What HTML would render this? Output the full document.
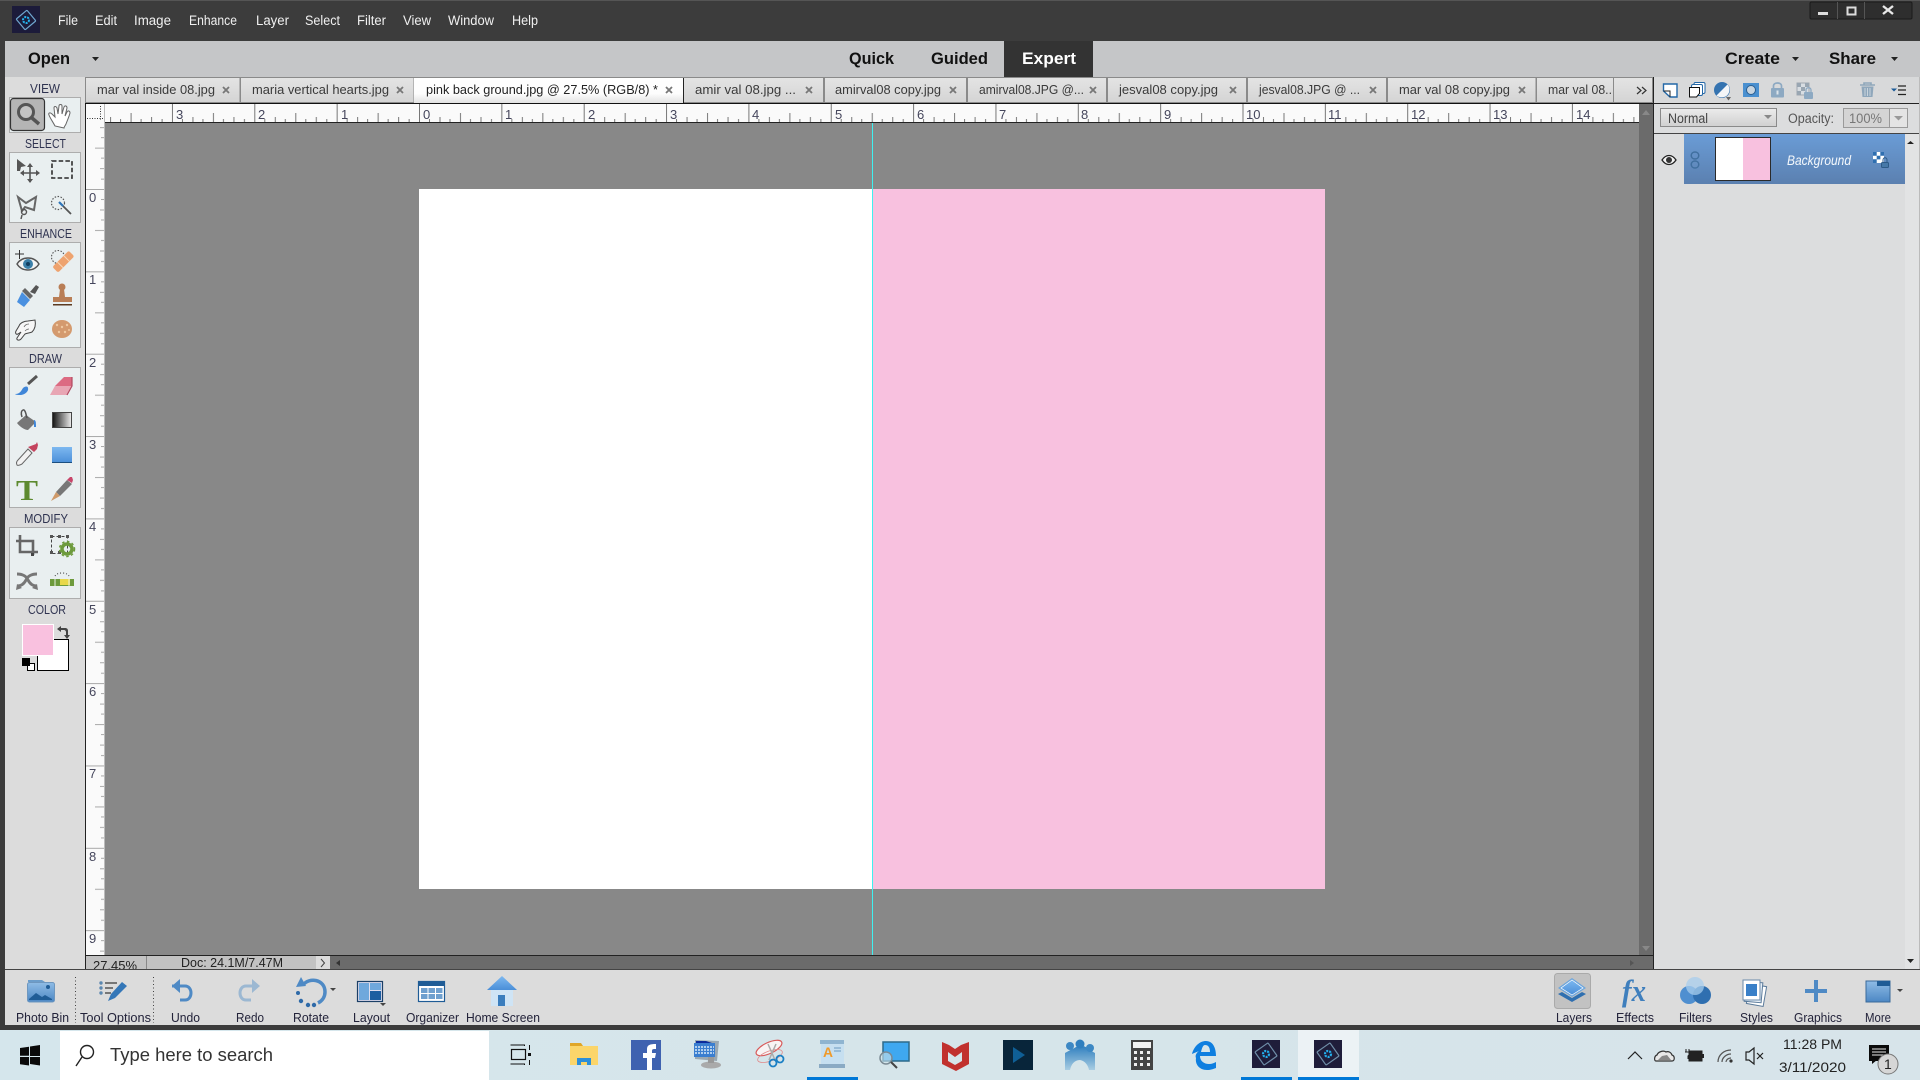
<!DOCTYPE html>
<html><head><meta charset="utf-8"><title>Photoshop Elements</title>
<style>
html,body{margin:0;padding:0;width:1920px;height:1080px;overflow:hidden;background:#3c3c3c}
svg{display:block;position:absolute;left:0;top:0}
text{font-family:"Liberation Sans",sans-serif;white-space:pre}
.m{font-size:13.5px;fill:#f0f0f0}
.t{font-size:13px;fill:#3a3a3a}
.x{font-size:13px;fill:#6e6e6e;font-weight:bold}
.b{font-size:17px;font-weight:bold;fill:#111}
.l{font-size:12.5px;fill:#2f3350}
.r{font-size:13px;fill:#45465c}
.c{font-size:12.5px;fill:#23233a}
.p{font-size:13px;fill:#4a4a4a}
</style></head><body>
<svg width="1920" height="1080" viewBox="0 0 1920 1080" xmlns="http://www.w3.org/2000/svg">
<defs>
<linearGradient id="tab" x1="0" y1="0" x2="0" y2="1"><stop offset="0" stop-color="#e4e4e4"/><stop offset="1" stop-color="#d4d4d4"/></linearGradient>
<linearGradient id="tabA" x1="0" y1="0" x2="0" y2="1"><stop offset="0" stop-color="#fff"/><stop offset=".6" stop-color="#fdfdfd"/><stop offset="1" stop-color="#dedede"/></linearGradient>
<linearGradient id="layer" x1="0" y1="0" x2="0" y2="1"><stop offset="0" stop-color="#6a9cd6"/><stop offset="1" stop-color="#5b80b0"/></linearGradient>
<linearGradient id="sel" x1="0" y1="0" x2="0" y2="1"><stop offset="0" stop-color="#ececec"/><stop offset="1" stop-color="#d0d0d0"/></linearGradient>
<linearGradient id="grad" x1="0" y1="0" x2="1" y2="0"><stop offset="0" stop-color="#111"/><stop offset="1" stop-color="#eee"/></linearGradient>
<linearGradient id="blue" x1="0" y1="0" x2="0" y2="1"><stop offset="0" stop-color="#7db8f0"/><stop offset="1" stop-color="#4a8ed8"/></linearGradient>
<linearGradient id="blue2" x1="0" y1="0" x2="0" y2="1"><stop offset="0" stop-color="#8fbce6"/><stop offset="1" stop-color="#4c87c4"/></linearGradient>
<linearGradient id="tb" x1="0" y1="0" x2="1" y2="0"><stop offset="0" stop-color="#d5e6ec"/><stop offset=".5" stop-color="#d6e5ea"/><stop offset="1" stop-color="#d7e4ea"/></linearGradient>
<linearGradient id="ppl" x1="0" y1="0" x2="0" y2="1"><stop offset="0" stop-color="#2f7fbf"/><stop offset="1" stop-color="#a8cde2"/></linearGradient>
<pattern id="hr" patternUnits="userSpaceOnUse" x="419" y="104" width="82.35" height="18">
<g fill="#777"><rect x="0" y="0" width="1" height="18"/><rect x="41" y="9" width="1" height="9"/><rect x="20.5" y="13" width="1" height="5"/><rect x="61.5" y="13" width="1" height="5"/>
<rect x="10" y="15" width="1" height="3"/><rect x="30.5" y="15" width="1" height="3"/><rect x="51" y="15" width="1" height="3"/><rect x="72" y="15" width="1" height="3"/></g></pattern>
<pattern id="vr" patternUnits="userSpaceOnUse" x="86" y="189" width="18" height="82.35">
<g fill="#a8a8a8"><rect x="0" y="0" width="18" height="1"/><rect x="9" y="41" width="9" height="1"/><rect x="14" y="20.5" width="4" height="1"/><rect x="14" y="61.5" width="4" height="1"/>
<rect x="15" y="10" width="3" height="1"/><rect x="15" y="30.5" width="3" height="1"/><rect x="15" y="51" width="3" height="1"/><rect x="15" y="72" width="3" height="1"/></g></pattern>
</defs>

<!-- Frame -->
<rect width="1920" height="1080" fill="#3c3c3c"/>
<rect x="0" y="0" width="1920" height="1" fill="#555"/>
<!-- Title logo -->
<rect x="12" y="6" width="28" height="27" fill="#1c1b3a"/>
<g transform="rotate(-40 26 20)"><rect x="19" y="13" width="14" height="14" fill="none" stroke="#6fa7d0" stroke-width="1.2" rx="1"/></g>
<circle cx="26" cy="20" r="3" fill="none" stroke="#26b5ee" stroke-width="2" stroke-dasharray="2 1"/>
<!-- Menu -->
<text class="m" x="58" y="25" textLength="20" lengthAdjust="spacingAndGlyphs">File</text>
<text class="m" x="95" y="25" textLength="22" lengthAdjust="spacingAndGlyphs">Edit</text>
<text class="m" x="134" y="25" textLength="37" lengthAdjust="spacingAndGlyphs">Image</text>
<text class="m" x="189" y="25" textLength="48" lengthAdjust="spacingAndGlyphs">Enhance</text>
<text class="m" x="256" y="25" textLength="33" lengthAdjust="spacingAndGlyphs">Layer</text>
<text class="m" x="305" y="25" textLength="35" lengthAdjust="spacingAndGlyphs">Select</text>
<text class="m" x="357" y="25" textLength="29" lengthAdjust="spacingAndGlyphs">Filter</text>
<text class="m" x="403" y="25" textLength="28" lengthAdjust="spacingAndGlyphs">View</text>
<text class="m" x="448" y="25" textLength="46" lengthAdjust="spacingAndGlyphs">Window</text>
<text class="m" x="512" y="25" textLength="26" lengthAdjust="spacingAndGlyphs">Help</text>
<!-- Window controls -->
<rect x="1810" y="2" width="102" height="17" rx="1.5" fill="#2e2e2e" stroke="#1a1a1a"/>
<rect x="1837" y="2" width="1" height="17" fill="#555"/><rect x="1864" y="2" width="1" height="17" fill="#555"/>
<rect x="1818" y="12" width="10" height="3" fill="#ddd"/>
<rect x="1847.5" y="7.5" width="8" height="7" fill="none" stroke="#ddd" stroke-width="2"/>
<path d="M1883 6L1893 14M1893 6L1883 14" stroke="#e8e8e8" stroke-width="2.4"/>

<!-- Options bar -->
<rect x="5" y="41" width="1915" height="36" fill="#c5c6c8"/>
<text class="b" x="28" y="64" textLength="42" lengthAdjust="spacingAndGlyphs">Open</text>
<path d="M92 57h7l-3.500 4z" fill="#222"/>
<text class="b" x="849" y="64" textLength="45" lengthAdjust="spacingAndGlyphs">Quick</text>
<text class="b" x="931" y="64" textLength="57" lengthAdjust="spacingAndGlyphs">Guided</text>
<rect x="1004" y="41" width="89" height="36" fill="#333"/>
<text class="b" x="1022" y="64" textLength="54" lengthAdjust="spacingAndGlyphs" style="fill:#fff">Expert</text>
<text class="b" x="1725" y="64" textLength="55" lengthAdjust="spacingAndGlyphs">Create</text>
<path d="M1792 57h7l-3.500 4z" fill="#222"/>
<text class="b" x="1829" y="64" textLength="47" lengthAdjust="spacingAndGlyphs">Share</text>
<path d="M1891 57h7l-3.500 4z" fill="#222"/>

<!-- Toolbox -->
<rect x="5" y="77" width="80" height="892" fill="#dcdcdc"/>
<rect x="85" y="77" width="1" height="892" fill="#222"/>
<g class="l">
<text class="l" x="30" y="93" textLength="30" lengthAdjust="spacingAndGlyphs">VIEW</text>
<text class="l" x="25" y="148" textLength="41" lengthAdjust="spacingAndGlyphs">SELECT</text>
<text class="l" x="20" y="238" textLength="52" lengthAdjust="spacingAndGlyphs">ENHANCE</text>
<text class="l" x="29" y="363" textLength="33" lengthAdjust="spacingAndGlyphs">DRAW</text>
<text class="l" x="24" y="523" textLength="44" lengthAdjust="spacingAndGlyphs">MODIFY</text>
<text class="l" x="28" y="614" textLength="38" lengthAdjust="spacingAndGlyphs">COLOR</text>
</g>
<g fill="#e9eff0" stroke="#adadad">
<rect x="9.500" y="97.500" width="71" height="35"/>
<rect x="9.500" y="152.500" width="71" height="70"/>
<rect x="9.500" y="242.500" width="71" height="105"/>
<rect x="9.500" y="367.500" width="71" height="140"/>
<rect x="9.500" y="527.500" width="71" height="71"/>
</g>
<!-- zoom/hand -->
<rect x="10.500" y="98.500" width="34" height="32" rx="3" fill="#b5b5b5" stroke="#333" stroke-width="1.200"/>
<circle cx="26" cy="112" r="7.500" fill="#c4c4c4" stroke="#555" stroke-width="3"/>
<path d="M32 118l7 6" stroke="#555" stroke-width="3.500"/>
<path d="M55 126c-2-4-5-8-6-11-1-2 1-3 3-1l3 3-1-9c0-2 2-2 3 0l1 6 1-8c0-2 3-2 3 0v8l2-7c1-2 3-1 3 1l-2 8 2-4c1-2 3-1 3 1-1 4-3 8-4 11-1 2-2 3-2 4z" fill="#fff" stroke="#666" stroke-width="1"/>
<!-- move -->
<path d="M17 159l9 7-5 1-1 4-3 0z" fill="#555"/>
<path d="M30 165v17M22 173h16" stroke="#555" stroke-width="1.600"/>
<path d="M30 163l-3 4h6zM30 183l-3-4h6zM20 173l4-3v6zM40 173l-4-3v6z" fill="#555"/>
<rect x="52" y="161" width="20" height="17" fill="none" stroke="#444" stroke-width="1.800" stroke-dasharray="4.500 2.200"/>
<!-- lasso -->
<path d="M18 197l8 6 10-6-2 13-9-3-3 4-4-14z" fill="none" stroke="#666" stroke-width="2"/>
<circle cx="24" cy="212" r="2.500" fill="none" stroke="#555" stroke-width="1.400"/><path d="M22 215l-1 4" stroke="#555" stroke-width="1.500"/>
<!-- wand -->
<circle cx="58" cy="203" r="6.500" fill="none" stroke="#555" stroke-width="1.200" stroke-dasharray="1.500 1.500"/>
<path d="M59 202l4 4" stroke="#2d74b8" stroke-width="2.200"/><path d="M63 206l8 8" stroke="#555" stroke-width="1.800"/>
<!-- eye -->
<path d="M15 254h9M19.500 250v9" stroke="#333" stroke-width="1"/>
<path d="M17 264c5-8 17-8 22 0-5 8-17 8-22 0z" fill="#f4f4f4" stroke="#555" stroke-width="1.400"/>
<circle cx="28" cy="264" r="5" fill="#3b7fa8"/><circle cx="28" cy="264" r="2" fill="#123e60"/>
<!-- bandage -->
<circle cx="58" cy="257" r="6.500" fill="#e9eff0" stroke="#555" stroke-width="1.100" stroke-dasharray="1.500 1.500"/>
<g transform="rotate(-45 63 262)"><rect x="52" y="258" width="23" height="8" rx="2" fill="#eea36f"/><path d="M59 258v8M68 258v8" stroke="#f8d8b8"/></g>
<!-- smart brush -->
<path d="M30 292l6-7 3 2-4 7z" fill="#555"/><path d="M25 288l8 8-3 3-8-8z" fill="#666"/>
<path d="M22 292l8 8-6 7-7-5z" fill="#4a90e0"/>
<!-- stamp -->
<circle cx="62" cy="287" r="3.500" fill="#b97e56"/><path d="M60 289h4l1 8h-6z" fill="#b97e56"/>
<rect x="53" y="297" width="19" height="5" fill="#b97e56"/><rect x="53" y="304" width="19" height="1.500" fill="#5c3a20"/>
<!-- smudge -->
<path d="M35 320c1 5 0 9-3 12-2 1-5 1-7 2l-4 5c-2 2-5 1-4-1l4-6-3 2c-2 1-3-1-2-3l3-5c1-3 5-5 9-5z" fill="#f6f6f6" stroke="#444" stroke-width="1"/>
<path d="M24 327c1-2 3-3 5-3M25 331c1-1 2-2 4-2" fill="none" stroke="#666" stroke-width=".8"/>
<!-- sponge -->
<ellipse cx="62" cy="329" rx="10" ry="9" fill="#d49a6e"/>
<g fill="#efc8a0"><circle cx="57" cy="325" r="1.200"/><circle cx="62" cy="327" r="1.200"/><circle cx="67" cy="325" r="1.200"/><circle cx="59" cy="332" r="1.200"/><circle cx="65" cy="332" r="1.200"/><circle cx="69" cy="330" r="1"/></g>
<!-- brush -->
<path d="M28 384l9-8" stroke="#555" stroke-width="3"/><path d="M15 394c5 0 6-3 8-6 2-2 5-2 5 0 1 3-3 7-8 7-2 0-4 0-5-1z" fill="#3f86d8"/>
<!-- eraser -->
<path d="M50 395l5-9h17l-5 9z" fill="#e8a6b4"/><path d="M55 386l9-9h8v9z" fill="#dc6b82"/><path d="M72 377v9l-5 9" fill="none" stroke="#b24a62" stroke-width="1.200"/>
<!-- bucket -->
<path d="M17 423l9-8 10 7-8 8c-3 0-8-3-11-7z" fill="#777"/><path d="M22 417c-1-3-1-6 1-7s3 4 4 8" fill="none" stroke="#555" stroke-width="1.500"/>
<path d="M34 420c2 0 2 4 2 7h-2z" fill="#3f86d8"/>
<!-- gradient -->
<rect x="52.500" y="412.500" width="19" height="15" fill="url(#grad)" stroke="#444"/>
<!-- dropper -->
<path d="M17 465c-1-2 0-4 1-5l10-11 4 4-10 11c-2 1-4 2-5 1z" fill="#f2f2f2" stroke="#666"/>
<path d="M28 447l8-3 1-2 1 3-1 4-3 3z" fill="#c4445e"/>
<!-- rect -->
<rect x="52" y="447" width="20" height="16" fill="url(#blue)"/><rect x="52" y="462" width="20" height="1" fill="#1c4f80"/>
<!-- type -->
<text x="16" y="500" style="font-family:'Liberation Serif',serif;font-size:29px;font-weight:bold;fill:#5d8a2f" textLength="22" lengthAdjust="spacingAndGlyphs">T</text>
<!-- pencil -->
<path d="M56 492l11-12 5 4-12 12z" fill="#777"/><path d="M67 480l3-3 2 0 1 3-1 3z" fill="#c8466a"/><path d="M56 492l4 4-9 5z" fill="#cf9a6a"/>
<!-- crop -->
<path d="M20 535v17h18M16 541h17v14" fill="none" stroke="#666" stroke-width="2.600"/><rect x="31" y="553" width="3" height="3" fill="#444"/>
<!-- transform -->
<rect x="51.500" y="536.500" width="16" height="17" fill="none" stroke="#444" stroke-dasharray="3 2"/>
<g fill="#555"><rect x="50" y="535" width="3" height="3"/><rect x="58" y="535" width="3" height="3"/><rect x="66" y="535" width="3" height="3"/><rect x="50" y="551" width="3" height="3"/><rect x="58" y="551" width="3" height="3"/></g>
<circle cx="67" cy="549" r="5" fill="none" stroke="#6d9a3c" stroke-width="3.500"/><circle cx="67" cy="549" r="7.500" fill="none" stroke="#6d9a3c" stroke-width="1.500" stroke-dasharray="2.500 2.500"/>
<!-- recompose -->
<path d="M17 574c6 0 9 2 11 6s5 6 9 6M37 574c-6 0-9 2-11 6s-5 6-9 6" fill="none" stroke="#777" stroke-width="3"/>
<path d="M16 590l1-6 5 4zM38 590l-1-6-5 4z" fill="#777"/>
<!-- straighten -->
<rect x="50" y="579" width="24" height="7" fill="#6d9a3c"/><rect x="60" y="579" width="10" height="6" fill="#e8d84a"/><path d="M55 579v7M69 579v7" stroke="#e8efe0"/>
<path d="M55 576c2-4 12-4 14 0" fill="none" stroke="#333" stroke-dasharray="1 2"/>
<!-- swatches -->
<rect x="37.500" y="639.500" width="31" height="31" fill="#fff" stroke="#000"/>
<rect x="22.500" y="624.500" width="31" height="31" fill="#f9c1df" stroke="#fff"/>
<rect x="27.500" y="663.500" width="7" height="7" fill="#fff" stroke="#000"/>
<rect x="22" y="658" width="8" height="8" fill="#000"/>
<path d="M57 629l4-3v2h4c2 0 3 1 3 3v4h2l-3 4-3-4h2v-3c0-1-1-2-2-2h-3v2z" fill="#444"/>

<!-- Tabs -->
<rect x="85" y="77" width="1568" height="26" fill="#d8d8d8"/>
<rect x="85" y="77" width="1568" height="1" fill="#8a8a8a"/>
<g fill="url(#tab)" stroke="#8a8a8a">
<rect x="85.500" y="77.500" width="154.500" height="25"/><rect x="240.500" y="77.500" width="173.500" height="25"/>
<rect x="683.500" y="77.500" width="140" height="25"/><rect x="824.500" y="77.500" width="142" height="25"/><rect x="967.500" y="77.500" width="139" height="25"/><rect x="1107.500" y="77.500" width="139" height="25"/><rect x="1247.500" y="77.500" width="139" height="25"/><rect x="1387.500" y="77.500" width="148.500" height="25"/><rect x="1536.500" y="77.500" width="116" height="25"/>
</g>
<rect x="414" y="78" width="269" height="26" fill="url(#tabA)"/>
<rect x="683" y="78" width="1" height="26" fill="#222"/>
<rect x="1613" y="78" width="1" height="25" fill="#8a8a8a"/>
<text class="t" x="97" y="94" textLength="118" lengthAdjust="spacingAndGlyphs">mar val inside 08.jpg</text>
<text class="t" x="252" y="94" textLength="137" lengthAdjust="spacingAndGlyphs">maria vertical hearts.jpg</text>
<text class="t" x="426" y="94" textLength="232" lengthAdjust="spacingAndGlyphs" style="fill:#222">pink back ground.jpg @ 27.5% (RGB/8) *</text>
<text class="t" x="695" y="94" textLength="101" lengthAdjust="spacingAndGlyphs">amir val 08.jpg ...</text>
<text class="t" x="835" y="94" textLength="106" lengthAdjust="spacingAndGlyphs">amirval08 copy.jpg</text>
<text class="t" x="979" y="94" textLength="105" lengthAdjust="spacingAndGlyphs">amirval08.JPG @...</text>
<text class="t" x="1119" y="94" textLength="99" lengthAdjust="spacingAndGlyphs">jesval08 copy.jpg</text>
<text class="t" x="1259" y="94" textLength="101" lengthAdjust="spacingAndGlyphs">jesval08.JPG @ ...</text>
<text class="t" x="1399" y="94" textLength="111" lengthAdjust="spacingAndGlyphs">mar val 08 copy.jpg</text>
<text class="t" x="1548" y="94" textLength="64" lengthAdjust="spacingAndGlyphs">mar val 08..</text>
<g stroke="#777" stroke-width="1.800">
<path d="M223 87l6 6M229 87l-6 6"/><path d="M397 87l6 6M403 87l-6 6"/><path d="M666 87l6 6M672 87l-6 6"/><path d="M806 87l6 6M812 87l-6 6"/><path d="M950 87l6 6M956 87l-6 6"/><path d="M1090 87l6 6M1096 87l-6 6"/><path d="M1230 87l6 6M1236 87l-6 6"/><path d="M1370 87l6 6M1376 87l-6 6"/><path d="M1519 87l6 6M1525 87l-6 6"/>
</g>
<path d="M1637 87l4 3.500-4 3.500M1642 87l4 3.500-4 3.500" fill="none" stroke="#333" stroke-width="1.200"/>

<!-- Rulers -->
<rect x="85" y="103" width="1568" height="1" fill="#111"/>
<rect x="86" y="104" width="1553" height="18" fill="#fafafa"/>
<rect x="105" y="104" width="1534" height="18" fill="url(#hr)"/>
<rect x="86" y="122" width="1553" height="1" fill="#222"/>
<rect x="86" y="104" width="19" height="851" fill="#fafafa"/>
<rect x="86" y="123" width="18" height="832" fill="url(#vr)"/>
<rect x="104" y="104" width="1" height="851" fill="#bbb"/>
<path d="M87 118.500h17M100.500 106v14" stroke="#333" stroke-dasharray="1 1.500"/>
<g class="r">
<text class="r" x="176" y="119">3</text><text class="r" x="258" y="119">2</text><text class="r" x="341" y="119">1</text><text class="r" x="423" y="119">0</text>
<text class="r" x="505" y="119">1</text><text class="r" x="588" y="119">2</text><text class="r" x="670" y="119">3</text><text class="r" x="752" y="119">4</text>
<text class="r" x="835" y="119">5</text><text class="r" x="917" y="119">6</text><text class="r" x="999" y="119">7</text><text class="r" x="1081" y="119">8</text>
<text class="r" x="1164" y="119">9</text><text class="r" x="1246" y="119">10</text><text class="r" x="1328" y="119">11</text><text class="r" x="1411" y="119">12</text>
<text class="r" x="1493" y="119">13</text><text class="r" x="1576" y="119">14</text>
<text class="r" x="89" y="202">0</text><text class="r" x="89" y="284">1</text><text class="r" x="89" y="367">2</text><text class="r" x="89" y="449">3</text>
<text class="r" x="89" y="531">4</text><text class="r" x="89" y="614">5</text><text class="r" x="89" y="696">6</text><text class="r" x="89" y="778">7</text>
<text class="r" x="89" y="861">8</text><text class="r" x="89" y="943">9</text>
</g>

<!-- Canvas -->
<rect x="105" y="123" width="1534" height="832" fill="#888888"/>
<rect x="419" y="189" width="453" height="700" fill="#fff"/>
<rect x="873" y="189" width="452" height="700" fill="#f8c1df"/>
<rect x="872" y="123" width="1" height="832" fill="#3ff0f0"/>
<!-- v scroll -->
<rect x="1639" y="104" width="14" height="865" fill="#6b6b6b"/>
<path d="M1646 110l-4 5h8z" fill="#888"/><path d="M1642 946h8l-4 5z" fill="#888"/>
<!-- status -->
<rect x="86" y="955" width="1567" height="14" fill="#6b6b6b"/>
<rect x="86" y="955" width="1567" height="1" fill="#222"/>
<rect x="86" y="956" width="60" height="13" fill="#c2c2c2"/>
<rect x="146" y="956" width="1" height="13" fill="#888"/>
<rect x="147" y="956" width="169" height="13" fill="#c2c2c2"/>
<rect x="316" y="956" width="14" height="13" fill="#dcdcdc"/>
<path d="M321 959l3.500 4-3.500 4" fill="none" stroke="#444"/>
<path d="M340 960l-4 3 4 3z" fill="#333"/><path d="M1630 960l4 3-4 3z" fill="#555"/>
<svg x="86" y="956" width="60" height="13"><text x="7" y="14" style="font-size:13px;fill:#222" textLength="44" lengthAdjust="spacingAndGlyphs">27.45%</text></svg>
<text x="181" y="967" style="font-size:12.500px;fill:#222" textLength="102" lengthAdjust="spacingAndGlyphs">Doc: 24.1M/7.47M</text>

<!-- Right panel -->
<rect x="1653" y="77" width="1" height="892" fill="#222"/>
<rect x="1654" y="77" width="266" height="26" fill="#d8d9da"/>
<rect x="1654" y="103" width="266" height="1" fill="#222"/>
<rect x="1654" y="104" width="266" height="29" fill="#dcddde"/>
<rect x="1654" y="133" width="266" height="1" fill="#444"/>
<rect x="1654" y="134" width="266" height="835" fill="#dcddde"/>
<rect x="1905" y="134" width="14" height="835" fill="#e2e3e4"/>
<rect x="1919" y="77" width="1" height="892" fill="#bbb"/>
<!-- panel icons -->
<path d="M1663.500 84h13.500v13h-7l-6.500-6z" fill="#fff" stroke="#2368a8" stroke-width="1.400"/><path d="M1663.500 91h6.500v6" fill="none" stroke="#222"/>
<rect x="1694" y="82.500" width="11" height="11" fill="#fff" stroke="#2368a8" rx="1.500"/><rect x="1691.500" y="84.500" width="11" height="11" fill="#fff" stroke="#2368a8" rx="1.500"/><path d="M1689.500 87.500h10v6l-3 3.500h-7z" fill="#fff" stroke="#111"/>
<circle cx="1722" cy="90" r="8" fill="#3473b0"/><path d="M1716.500 95.500l11-11c3 3 2.500 8-.5 11-3 2.500-7.500 2.500-10.500 0z" fill="#f4f6f8"/><path d="M1726 97l5 0-2.500 3.500z" fill="#666"/>
<rect x="1743" y="83" width="16" height="14" fill="#4a90d0"/><circle cx="1751" cy="90" r="4.500" fill="#c8d5e0" stroke="#2d5f90"/>
<rect x="1771" y="88" width="13" height="9.500" rx="1" fill="#8da9c2"/><path d="M1773.500 88v-2c0-4 8-4 8 0v2" fill="none" stroke="#8da9c2" stroke-width="1.700"/><rect x="1776.500" y="90.500" width="2" height="4" fill="#dce4ea"/>
<rect x="1797" y="83" width="12" height="12" fill="#d8dde2" stroke="#a0a8b0"/><path d="M1797 83h4v4h-4zM1805 83h4v4h-4zM1801 87h4v4h-4zM1797 91h4v4h-4z" fill="#99a6b2"/><rect x="1804" y="92" width="9" height="7" rx="1" fill="#8da9c2"/><path d="M1806 92v-2c0-3 5-3 5 0v2" fill="none" stroke="#8da9c2" stroke-width="1.300"/>
<path d="M1860 85h15M1864 85v-2h7v2" fill="none" stroke="#8fa7bb" stroke-width="1.600"/><path d="M1861.500 86.500h12l-1 10.500h-10z" fill="#8fa7bb"/><path d="M1865 88v8M1867.500 88v8M1870 88v8" stroke="#d8dfe5" stroke-width=".8"/>
<path d="M1891 88.500h6l-3 3z" fill="#1a5a98"/><path d="M1898 86h8M1898 90h8M1898 94.500h8" stroke="#222" stroke-width="1.200"/>
<!-- blend -->
<rect x="1660.500" y="108.500" width="116" height="18" fill="url(#sel)" stroke="#8a8a8a"/>
<text class="p" x="1668" y="123" style="font-size:13.500px;fill:#444" textLength="40" lengthAdjust="spacingAndGlyphs">Normal</text>
<path d="M1764 115h8l-4 4z" fill="#888"/>
<text class="p" x="1788" y="123" style="font-size:13.500px;fill:#555" textLength="46" lengthAdjust="spacingAndGlyphs">Opacity:</text>
<rect x="1843.500" y="108.500" width="64" height="19" fill="#d4d4d4" stroke="#9a9a9a"/><rect x="1889" y="109" width="18" height="18" fill="#e4e4e4"/><rect x="1889" y="109" width="1" height="18" fill="#9a9a9a"/>
<text class="p" x="1849" y="123" style="font-size:13.500px;fill:#777" textLength="33" lengthAdjust="spacingAndGlyphs">100%</text>
<path d="M1894 116h9l-4.500 4.500z" fill="#999"/>
<!-- layer -->
<rect x="1684" y="134" width="221" height="50" fill="url(#layer)"/>
<rect x="1715.500" y="137.500" width="55" height="43" fill="#fff" stroke="#2a2a2a"/><rect x="1743" y="138" width="27" height="42" fill="#f8c1df"/>
<text x="1787" y="165" style="font-size:14px;font-style:italic;fill:#f4f8fc" textLength="64" lengthAdjust="spacingAndGlyphs">Background</text>
<path d="M1662 160c4-6 10-6 14 0-4 6-10 6-14 0z" fill="#f5f5f5" stroke="#222" stroke-width="1.300"/><circle cx="1669" cy="160" r="3" fill="#333"/>
<path d="M1695 152c-5 0-5 7 0 7M1695 152c5 0 5 7 0 7M1695 161c-5 0-5 7 0 7M1695 161c5 0 5 7 0 7" fill="none" stroke="#3f6e9e" stroke-width="1.500"/>
<rect x="1873" y="152" width="11" height="11" fill="#fff"/><path d="M1873 152h3.700v3.700h-3.700zM1880.300 152h3.700v3.700h-3.700zM1876.700 155.700h3.700v3.700h-3.700zM1873 159.300h3.700v3.700h-3.700z" fill="#2f6fb0"/>
<rect x="1881.500" y="162.500" width="7" height="5" rx="1" fill="#4678a8" stroke="#2d5a88"/><path d="M1883 162v-2c0-3 4-3 4 0v2" fill="none" stroke="#2d5a88"/>
<path d="M1907 144h7l-3.500-3z" fill="#222"/><path d="M1907 959h7l-3.500 4z" fill="#222"/>

<!-- Bottom bin -->
<rect x="5" y="969" width="1915" height="56" fill="#dcdcdc"/>
<rect x="5" y="969" width="1915" height="1" fill="#444"/>
<path d="M75.500 977v46M153.500 977v46" stroke="#444" stroke-dasharray="1 2.500"/>
<g class="c">
<text class="c" x="16" y="1022" textLength="53" lengthAdjust="spacingAndGlyphs">Photo Bin</text>
<text class="c" x="80" y="1022" textLength="71" lengthAdjust="spacingAndGlyphs">Tool Options</text>
<text class="c" x="171" y="1022" textLength="29" lengthAdjust="spacingAndGlyphs">Undo</text>
<text class="c" x="236" y="1022" textLength="28" lengthAdjust="spacingAndGlyphs">Redo</text>
<text class="c" x="293" y="1022" textLength="36" lengthAdjust="spacingAndGlyphs">Rotate</text>
<text class="c" x="353" y="1022" textLength="37" lengthAdjust="spacingAndGlyphs">Layout</text>
<text class="c" x="406" y="1022" textLength="53" lengthAdjust="spacingAndGlyphs">Organizer</text>
<text class="c" x="466" y="1022" textLength="74" lengthAdjust="spacingAndGlyphs">Home Screen</text>
<text class="c" x="1556" y="1022" textLength="36" lengthAdjust="spacingAndGlyphs">Layers</text>
<text class="c" x="1616" y="1022" textLength="38" lengthAdjust="spacingAndGlyphs">Effects</text>
<text class="c" x="1679" y="1022" textLength="33" lengthAdjust="spacingAndGlyphs">Filters</text>
<text class="c" x="1740" y="1022" textLength="33" lengthAdjust="spacingAndGlyphs">Styles</text>
<text class="c" x="1794" y="1022" textLength="48" lengthAdjust="spacingAndGlyphs">Graphics</text>
<text class="c" x="1865" y="1022" textLength="26" lengthAdjust="spacingAndGlyphs">More</text>
</g>
<!-- photo bin -->
<path d="M28 980h14l3 2H28z" fill="#6c9dca"/><rect x="27.500" y="982.500" width="27" height="19.500" rx="2" fill="url(#blue2)" stroke="#6e97bf"/><circle cx="48" cy="987" r="2" fill="#1f5c96"/><path d="M29 999l7-6 6 4 3-2 7 4v1H29z" fill="#1f5c96"/>
<!-- tool options -->
<g fill="#5b87b0"><circle cx="101" cy="983" r="1.700"/><circle cx="101" cy="988" r="1.700"/><circle cx="101" cy="993" r="1.700"/></g><path d="M105 983h12M105 988h8M105 993h6" stroke="#555" stroke-width="1.500"/><path d="M122 982l5 4-12 12-7 3 3-7z" fill="#3477b8"/>
<!-- undo -->
<path d="M172 986h13c8 0 8 14 0 14h-5" fill="none" stroke="#4f8ac5" stroke-width="3"/><path d="M172 986l8-7v14z" fill="#4f8ac5"/>
<!-- redo -->
<path d="M257 986h-11c-8 0-8 14 0 14h5" fill="none" stroke="#9cb8d2" stroke-width="3"/><path d="M260 986l-8-7v14z" fill="#9cb8d2"/>
<!-- rotate -->
<path d="M303 985c6-8 22-6 22 7 0 5-3 9-7 11" fill="none" stroke="#4f8ac5" stroke-width="3.500"/><path d="M296 987l5-10 5 9z" fill="#4f8ac5"/><g fill="#2e6aa8"><circle cx="298" cy="993" r="2"/><circle cx="301" cy="1001" r="2.200"/><circle cx="308" cy="1005" r="2.200"/><circle cx="314" cy="1005" r="2.200"/></g>
<path d="M330 988h6l-3 3z" fill="#444"/>
<!-- layout -->
<rect x="357.500" y="981.500" width="25" height="20" fill="#dde" stroke="#1b3f66" stroke-width="1.200"/><rect x="359" y="983" width="10" height="17" fill="#6fa8dc"/><rect x="370" y="983" width="11" height="7" fill="#6fa8dc"/><rect x="370" y="991" width="11" height="9" fill="#1c5ea0"/>
<path d="M380 1003h6l-3 3z" fill="#444"/>
<!-- organizer -->
<rect x="418.500" y="981.500" width="26" height="20" fill="#fff" stroke="#1f5c96" stroke-width="1.200"/><rect x="418" y="981" width="27" height="5" fill="#1f5c96"/>
<g fill="#6fa0cf"><rect x="421" y="988" width="6.500" height="5"/><rect x="428.500" y="988" width="6.500" height="5"/><rect x="436" y="988" width="6.500" height="5"/><rect x="421" y="994" width="6.500" height="5"/><rect x="428.500" y="994" width="6.500" height="5"/><rect x="436" y="994" width="6.500" height="5"/></g>
<!-- home -->
<path d="M487 990l15-14 15 14z" fill="url(#blue)"/><rect x="491" y="990" width="22" height="16" fill="#cfe4f5"/><rect x="498" y="995" width="7" height="11" fill="#3a7dbd"/>
<!-- Layers btn -->
<rect x="1554.500" y="973.500" width="36" height="35" rx="3" fill="#c2c2c2" stroke="#aaa"/>
<path d="M1572 978l14 10-14 9-14-9z" fill="#6ea6dc"/><path d="M1572 980l11 8-11 7-11-7z" fill="url(#blue)" stroke="#fff" stroke-width=".7"/><path d="M1558 994l4-2 10 6 10-6 4 2-14 8z" fill="#2f6fb0"/>
<!-- fx -->
<text x="1622" y="1001" style="font-family:'Liberation Serif',serif;font-size:31px;font-style:italic;font-weight:bold;fill:#3f7fbd" textLength="24" lengthAdjust="spacingAndGlyphs">fx</text>
<!-- filters -->
<circle cx="1689" cy="995" r="9" fill="#4f8fd0"/><circle cx="1702" cy="995" r="9" fill="#2f6fb0"/><circle cx="1695" cy="986" r="9" fill="#a8cdee" fill-opacity=".75"/>
<!-- styles -->
<rect x="1748" y="985" width="17" height="20" fill="#fff" stroke="#5a7a9a" transform="rotate(10 1756 995)"/><rect x="1745" y="982" width="17" height="20" fill="#e8f0f8" stroke="#5a7a9a" transform="rotate(5 1753 992)"/><rect x="1743" y="980" width="17" height="20" fill="#fff" stroke="#6a8aaa"/><rect x="1746" y="984" width="11" height="12" fill="#3a80c8"/>
<!-- graphics -->
<path d="M1816 980v22M1805 991h22" stroke="#4f8ac5" stroke-width="4"/>
<!-- more -->
<rect x="1866" y="981" width="24" height="21" fill="url(#blue2)" stroke="#3a6a9a"/><rect x="1877" y="981" width="13" height="5" fill="#1f5c96"/>
<path d="M1897 989h6l-3 3z" fill="#444"/>

<!-- Dark strip -->
<rect x="0" y="1025" width="1920" height="5" fill="#3c3c3c"/>
<rect x="0" y="41" width="5" height="989" fill="#3c3c3c"/>

<!-- Taskbar -->
<rect x="0" y="1030" width="1920" height="50" fill="url(#tb)"/>
<path d="M20 1048l9-1.300v9h-9zM30 1046.500l10-1.500v11h-10zM20 1057h9v8.500l-9-1.300zM30 1057h10v8.500l-10-1.500z" fill="#0a0a0a"/>
<rect x="60" y="1031" width="429" height="49" fill="#fff"/>
<circle cx="87" cy="1052" r="6.500" fill="none" stroke="#222" stroke-width="1.400"/><path d="M82 1057l-6 9" stroke="#222" stroke-width="1.400"/>
<text x="110" y="1061" style="font-size:18px;fill:#333" textLength="163" lengthAdjust="spacingAndGlyphs">Type here to search</text>
<path d="M510.500 1045h14v1M510.500 1064h14v1" stroke="#111" fill="none"/><rect x="511.500" y="1049.500" width="14" height="10" fill="none" stroke="#111" stroke-width="1.200"/><path d="M529.500 1045v5M529.500 1060v5" stroke="#111"/><rect x="528" y="1053" width="3" height="3" fill="#111"/>
<!-- explorer -->
<path d="M570 1043h11l2 3h-13z" fill="#e0a628"/><rect x="570" y="1046" width="28" height="19" fill="#fbd56a"/><path d="M577 1065v-7h14v7h-4v-3h-6v3z" fill="#2d8fd8"/>
<!-- FB -->
<rect x="631" y="1040" width="30" height="30" fill="#3f62b0"/>
<path d="M647 1070v-12h-4v-5h4v-4c0-4 3-5 9-5v5c-3 0-4 0-4 2v2h4l-1 5h-3v12z" fill="#fff"/>
<!-- PC -->
<path d="M695 1040l24 1-2 20-22-2z" fill="#9aa8b2"/><rect x="694" y="1043" width="21" height="14" fill="#3a7ed0"/><g stroke="#d8e8f8" stroke-width="1.400" stroke-dasharray="2 1"><path d="M695 1047h19M695 1050h19M695 1053h19"/></g><path d="M696 1041h10l6 2H696z" fill="#0c2a9a"/>
<ellipse cx="711" cy="1065" rx="10" ry="3.500" fill="#aaa"/><rect x="708" y="1057" width="6" height="6" fill="#999"/>
<!-- Snip -->
<ellipse cx="769" cy="1048" rx="14" ry="5.500" transform="rotate(-25 769 1048)" fill="#f8f4f4" stroke="#d85a5a" stroke-width="1.200"/><ellipse cx="770" cy="1056" rx="13" ry="5" transform="rotate(-20 770 1056)" fill="none" stroke="#e08a8a" stroke-width=".8"/>
<path d="M768 1044l7 16M776 1044l-7 16" stroke="#aaa" stroke-width="1.500"/>
<circle cx="773" cy="1063" r="3.500" fill="none" stroke="#1a7fc4" stroke-width="1.800"/><circle cx="780" cy="1059" r="3.500" fill="none" stroke="#1a7fc4" stroke-width="1.800"/>
<!-- WordPad -->
<rect x="821" y="1040" width="23" height="28" fill="#c6dff0"/><rect x="820" y="1040" width="24" height="4" fill="#8fb4d0"/><rect x="819" y="1064" width="26" height="4" fill="#8aaac4"/><text x="823" y="1057" style="font-size:14px;font-weight:bold;fill:#ef9a2a" textLength="10" lengthAdjust="spacingAndGlyphs">A</text><path d="M834 1048h7M834 1051h7" stroke="#6a9ac0"/>
<rect x="807" y="1077" width="51" height="3" fill="#0078d7"/>
<!-- Magnifier -->
<rect x="883" y="1042" width="26" height="19" fill="#3fa8f0" stroke="#2d6a8a" stroke-width="1.500"/><circle cx="886" cy="1058" r="6" fill="#cfe2ea" fill-opacity=".6" stroke="#7a8a94" stroke-width="1.500"/><path d="M891 1062l6 6" stroke="#444" stroke-width="2"/>
<!-- McAfee -->
<path d="M942 1042l7 3 6 4 6-4 8-3v22l-13 7-14-7zM948 1052v9l7 4 7-4v-9l-7 5z" fill="#c1312e" fill-rule="evenodd"/>
<!-- Play -->
<rect x="1003" y="1040" width="30" height="30" fill="#08253a"/><path d="M1013 1047l12 8-12 8z" fill="#0f5f96"/>
<!-- People -->
<path d="M1065 1070v-17c5-3 8-4 11-6 6-3 10 0 13 2 3 2 4 3 6 4v17h-6c-1-5-4-9-9-10-6 0-9 5-10 10z" fill="url(#ppl)"/><circle cx="1070" cy="1046" r="4" fill="#3d88c4"/><circle cx="1080" cy="1044" r="4.500" fill="#2f7fbf"/><circle cx="1090" cy="1048" r="4" fill="#3d88c4"/>
<!-- Calc -->
<rect x="1131" y="1040" width="22" height="30" fill="#444"/><rect x="1133" y="1042" width="18" height="6" fill="#f2f2f2"/>
<g fill="#eee"><rect x="1134" y="1051" width="3" height="3"/><rect x="1140" y="1051" width="3" height="3"/><rect x="1147" y="1051" width="3" height="3"/><rect x="1134" y="1057" width="3" height="3"/><rect x="1140" y="1057" width="3" height="3"/><rect x="1147" y="1057" width="3" height="3"/><rect x="1134" y="1063" width="3" height="3"/><rect x="1140" y="1063" width="3" height="3"/><rect x="1147" y="1063" width="3" height="3"/></g>
<!-- Edge -->
<path d="M1192 1054c2-8 8-13 14-13 7 0 10 7 10 15h-16c0 5 4 8 9 8 3 0 5-1 7-2v6c-3 1-5 2-9 2-8 0-12-6-11-12-1-2 0-5 3-7-2 1-5 2-7 3zM1201 1052h9c0-5-2-7-5-7-2 0-3 3-4 7z" fill="#0f7fe0" fill-rule="evenodd"/>
<!-- PSE -->
<rect x="1252" y="1040" width="28" height="28" fill="#1f1d3a"/><g transform="rotate(-35 1266 1054)"><rect x="1258" y="1046" width="16" height="16" fill="none" stroke="#6f8ea8" stroke-width="1.200" rx="1"/></g><circle cx="1266" cy="1054" r="3" fill="none" stroke="#23b0ee" stroke-width="2.200" stroke-dasharray="2 1"/>
<rect x="1241" y="1077" width="51" height="3" fill="#0078d7"/>
<rect x="1298" y="1030" width="61" height="47" fill="#ecf2f5"/>
<rect x="1314" y="1040" width="28" height="28" fill="#1f1d3a"/><g transform="rotate(-35 1328 1054)"><rect x="1320" y="1046" width="16" height="16" fill="none" stroke="#6f8ea8" stroke-width="1.200" rx="1"/></g><circle cx="1328" cy="1054" r="3" fill="none" stroke="#23b0ee" stroke-width="2.200" stroke-dasharray="2 1"/>
<rect x="1298" y="1077" width="61" height="3" fill="#0078d7"/>
<!-- Tray -->
<path d="M1628 1059l7-7 7 7" fill="none" stroke="#222" stroke-width="1.200"/>
<path d="M1656 1061c-2 0-2-5 1-6 1-3 6-5 9-3 2-1 5 0 6 3 3 1 3 6 0 6z" fill="#e8e8e8" stroke="#333" stroke-width="1.200"/><path d="M1658 1060h13l-4-5-5 1z" fill="#888"/>
<rect x="1689" y="1051" width="13" height="10" fill="#222" stroke="#222"/><rect x="1702" y="1054" width="2" height="4" fill="#222"/><path d="M1686 1049v3M1689 1049v3M1685 1052h5v2l-2 2v3" stroke="#222" fill="none"/>
<path d="M1718 1062c0-7 6-12 13-12M1722 1062c0-4 4-8 9-8M1726 1062c0-2 2-4 5-4" fill="none" stroke="#555" stroke-width="1.200"/><circle cx="1731" cy="1061" r="1.600" fill="#333"/>
<path d="M1746 1052v8h3l5 4v-16l-5 4z" fill="none" stroke="#222" stroke-width="1.200"/><path d="M1757 1053l6 6M1763 1053l-6 6" stroke="#222" stroke-width="1.200"/>
<text x="1783" y="1049" style="font-size:14px;fill:#222" textLength="59" lengthAdjust="spacingAndGlyphs">11:28 PM</text>
<text x="1779" y="1072" style="font-size:14px;fill:#222" textLength="67" lengthAdjust="spacingAndGlyphs">3/11/2020</text>
<rect x="1869" y="1045" width="20" height="16" fill="#0a0a0a"/><path d="M1872 1064v-4h5z" fill="#0a0a0a"/><path d="M1872 1049h14M1872 1052h14M1872 1055h14" stroke="#e8e8e8"/>
<circle cx="1888" cy="1064" r="10" fill="#d6d6d6" stroke="#777"/>
<text x="1884" y="1069" style="font-size:14px;fill:#222">1</text>
</svg>
</body></html>
